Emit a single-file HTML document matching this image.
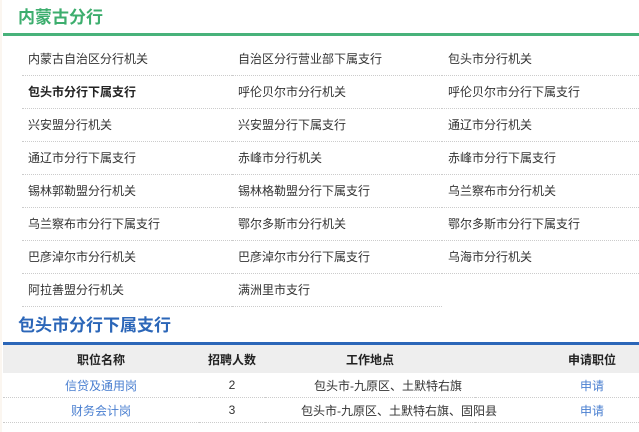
<!DOCTYPE html>
<html><head><meta charset="utf-8"><style>
body{margin:0;width:639px;height:432px;overflow:hidden;background:#fff;font-family:"Liberation Sans","Noto Sans CJK SC",sans-serif;font-size:12px;color:#333;position:relative}
.strip{position:absolute;left:0;top:0;width:2px;height:432px;background:#fbf6f0}
.h1{position:absolute;left:18px;top:7px;font-size:17px;color:#3dae6e;line-height:22px;font-weight:bold}
.l1{position:absolute;left:3px;top:33px;width:636px;height:3px;background:#48b27a}
.grid{position:absolute;left:22px;top:43px;width:617px}
.c{float:left;width:210px;height:33px;line-height:33px;border-bottom:1px dotted #ccc;padding-left:6px;box-sizing:border-box;white-space:nowrap}
.c:nth-child(3n){width:197px}
.b{font-weight:bold;color:#222}
.h2{position:absolute;left:18px;top:315px;font-size:17px;color:#2b66b8;line-height:22px;font-weight:bold}
.l2{position:absolute;left:3px;top:342px;width:636px;height:3px;background:#2b66b8}
table{position:absolute;left:3px;top:345px;width:636px;border-collapse:collapse;table-layout:fixed}
th{background:#eee;height:28px;padding:0;font-weight:bold;color:#222;font-size:12px;white-space:nowrap}
td{height:24px;padding:0;text-align:center;border-bottom:1px dotted #ccc;white-space:nowrap}
th:nth-child(4),td:nth-child(4){padding-left:70px}
td:nth-child(3){padding-left:36px}
a{color:#4a7fd0;text-decoration:none}
</style></head><body>
<div class="strip"></div>
<div class="h1">内蒙古分行</div><div class="l1"></div>
<div class="grid">
<div class="c">内蒙古自治区分行机关</div><div class="c">自治区分行营业部下属支行</div><div class="c">包头市分行机关</div>
<div class="c b">包头市分行下属支行</div><div class="c">呼伦贝尔市分行机关</div><div class="c">呼伦贝尔市分行下属支行</div>
<div class="c">兴安盟分行机关</div><div class="c">兴安盟分行下属支行</div><div class="c">通辽市分行机关</div>
<div class="c">通辽市分行下属支行</div><div class="c">赤峰市分行机关</div><div class="c">赤峰市分行下属支行</div>
<div class="c">锡林郭勒盟分行机关</div><div class="c">锡林格勒盟分行下属支行</div><div class="c">乌兰察布市分行机关</div>
<div class="c">乌兰察布市分行下属支行</div><div class="c">鄂尔多斯市分行机关</div><div class="c">鄂尔多斯市分行下属支行</div>
<div class="c">巴彦淖尔市分行机关</div><div class="c">巴彦淖尔市分行下属支行</div><div class="c">乌海市分行机关</div>
<div class="c">阿拉善盟分行机关</div><div class="c">满洲里市支行</div>
</div>
<div class="h2">包头市分行下属支行</div><div class="l2"></div>
<table>
<colgroup><col style="width:196px"><col style="width:66px"><col style="width:210px"><col style="width:164px"></colgroup>
<tr><th>职位名称</th><th>招聘人数</th><th>工作地点</th><th>申请职位</th></tr>
<tr><td><a>信贷及通用岗</a></td><td>2</td><td>包头市-九原区、土默特右旗</td><td><a>申请</a></td></tr>
<tr><td><a>财务会计岗</a></td><td>3</td><td>包头市-九原区、土默特右旗、固阳县</td><td><a>申请</a></td></tr>
</table>
</body></html>
